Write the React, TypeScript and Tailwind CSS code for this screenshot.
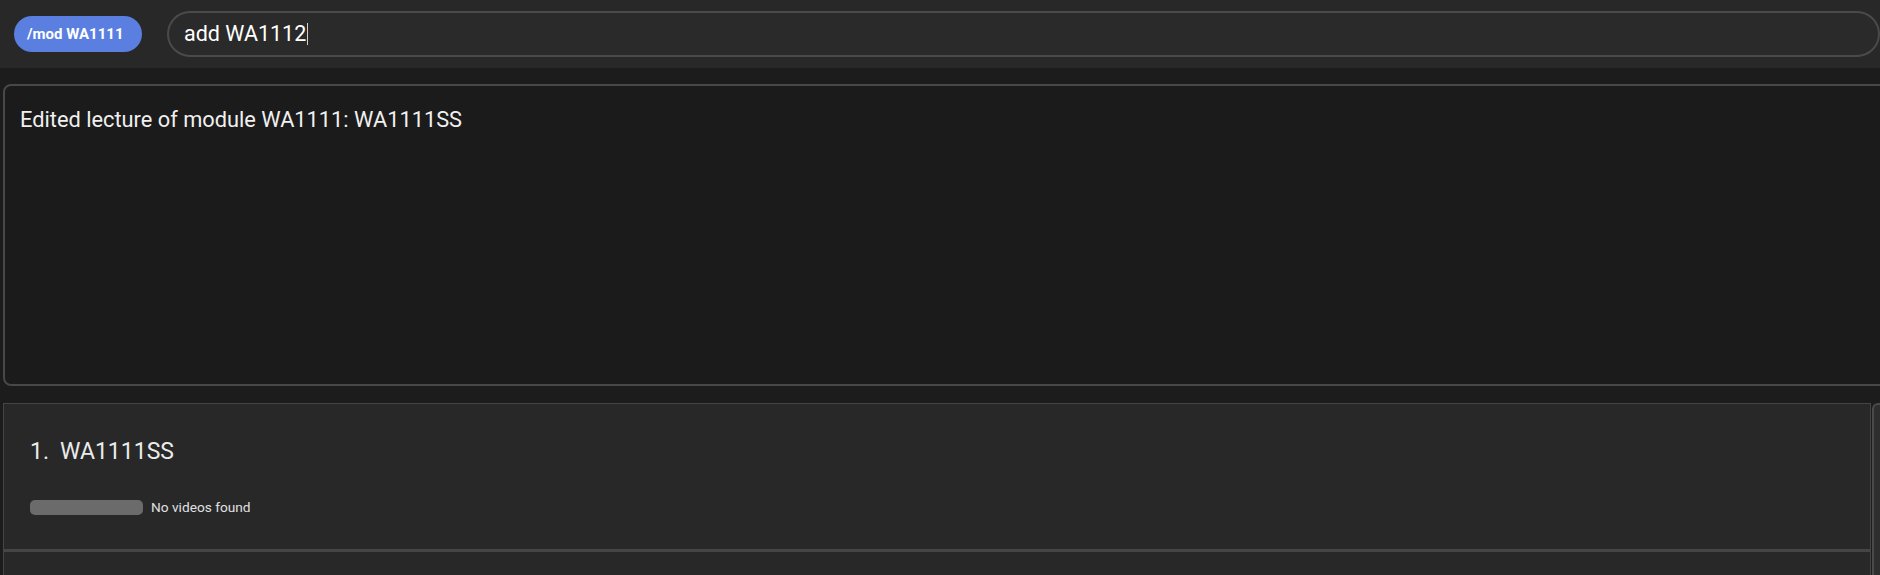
import React from "react";

export default function App() {
  return (
    <div className="w-[1880px] h-[575px] bg-[#1c1c1c] overflow-hidden flex flex-col font-['Roboto',sans-serif]">
      <div className="h-[68px] shrink-0 bg-[#282828] flex items-center pl-[14px]">
        <div className="h-[36px] w-[128px] shrink-0 rounded-full bg-[#5b7fe0] flex items-center pl-[13px] text-white text-[15px] font-bold">
          /mod WA1111
        </div>
        <div className="ml-[25px] flex-1 h-[46px] rounded-full border-2 border-[#4a4a4a] bg-[#2a2a2a] flex items-center pl-[15px] text-[21.5px] text-white">
          <span>add WA1112</span>
          <span className="inline-block w-[1px] h-[22px] bg-[#cfcfcf] ml-[1px]" />
        </div>
      </div>
      <div className="pl-[3px] pt-[16px] flex flex-col">
        <div className="h-[302px] mr-[-12px] rounded-[8px] border-2 border-[#484848] bg-[#1b1b1b] pl-[15px] pt-[19px] text-[21.8px] leading-[30px] text-[#f0f0f0]">
          Edited lecture of module WA1111: WA1111SS
        </div>
        <div className="mt-[17px] flex">
          <div className="flex-1 flex flex-col">
            <div className="h-[148px] border-x border-t border-b-2 border-[#454545] bg-[#282828] pl-[26px] pt-[33px]">
              <div className="flex text-[23px] leading-[30px] text-[#ebebeb]">
                <span className="w-[30px]">1.</span>
                <span>WA1111SS</span>
              </div>
              <div className="mt-[30px] flex items-center">
                <div className="w-[113px] h-[15px] rounded-[5px] bg-[#6b6b6b]" />
                <span className="ml-[8px] text-[13.7px] text-[#e0e0e0]">No videos found</span>
              </div>
            </div>
            <div className="h-[148px] border-x border-t border-[#454545] bg-[#282828]" />
          </div>
          <div className="w-[8px] ml-[1px] rounded-tl-[6px] border-l-2 border-t-2 border-[#4a4a4a] bg-[#2e2e2e]" />
        </div>
      </div>
    </div>
  );
}
